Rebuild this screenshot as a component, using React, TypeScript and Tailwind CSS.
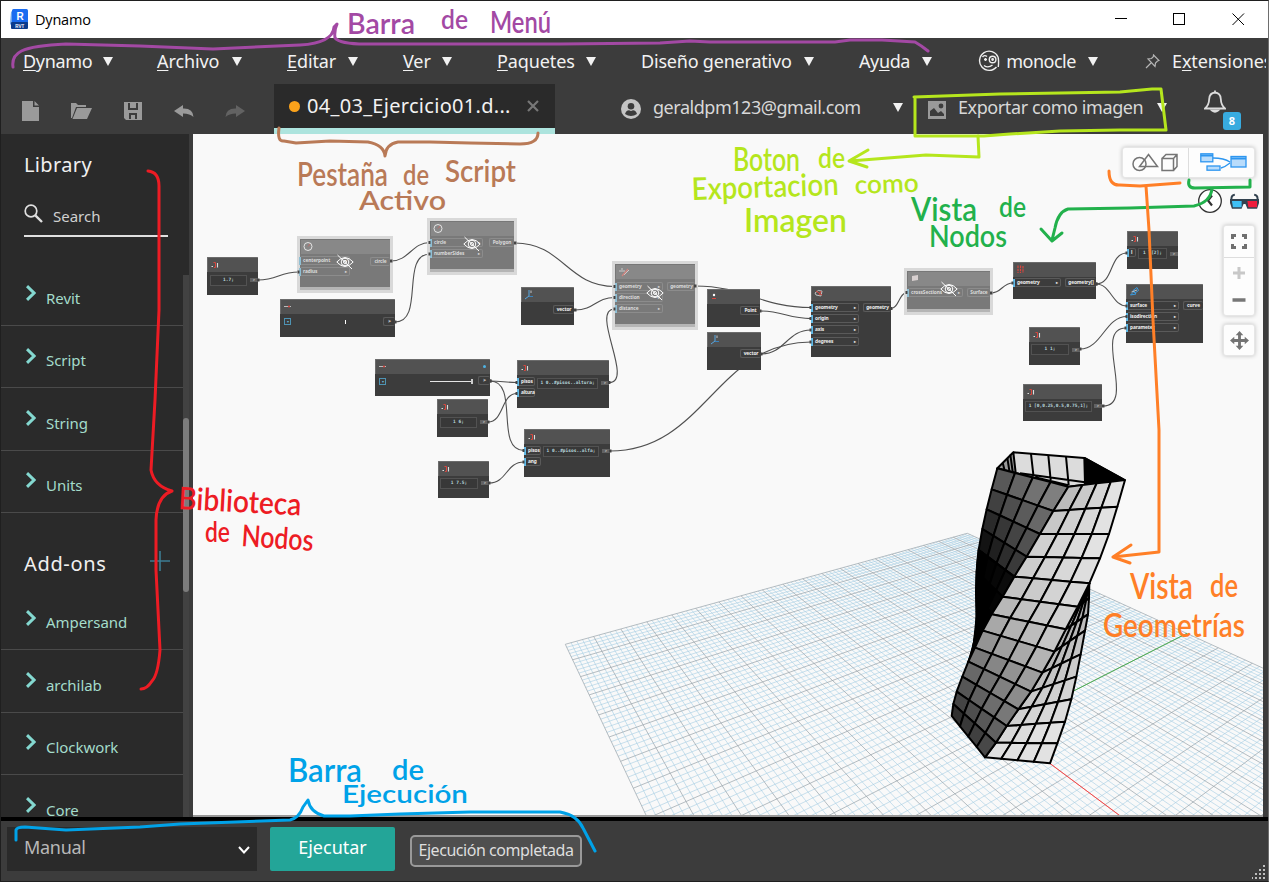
import React from "react";

const UI = "font-['Noto_Sans',sans-serif]";

/* ---------- small pieces ---------- */

function Tri() {
  return (
    <svg width="10" height="9" viewBox="0 0 10 9" className="shrink-0 -translate-x-px">
      <path d="M0 0H10L5 9Z" fill="#f2f2f2" />
    </svg>
  );
}

type MenuDef = { pre?: string; key: string; post: string; cls: string };
const MENUS: MenuDef[] = [
  { key: "D", post: "ynamo", cls: "w-[91px] mr-[43px] tracking-[-0.35px]" },
  { key: "A", post: "rchivo", cls: "w-[86px] mr-[44px]" },
  { key: "E", post: "ditar", cls: "w-[72px] mr-[44px]" },
  { key: "V", post: "er", cls: "w-[50px] mr-[44px]" },
  { key: "P", post: "aquetes", cls: "w-[100px] mr-[44px]" },
  { key: "", pre: "Diseño generativo", post: "", cls: "w-[174px] mr-[44px] tracking-[-0.2px]" },
  { key: "u", pre: "Ay", post: "da", cls: "w-[74px] mr-[45px] tracking-[-0.4px]" },
];

function TitleBar() {
  return (
    <div className="flex h-[37px] shrink-0 items-center bg-white pl-[9px]">
      <svg width="20" height="21" viewBox="0 0 20 21" className="shrink-0">
        <path d="M1 3L3 1V18L0 15Z" fill="#6aa5ee" />
        <rect x="2" y="0" width="16" height="15" rx="1.5" fill="#1a6cf0" />
        <rect x="1" y="13" width="17" height="7" rx="1" fill="#0c3c8c" />
        <text x="10" y="11" fontSize="10" fontWeight="700" fill="#fff" textAnchor="middle" fontFamily="Liberation Sans">R</text>
        <text x="9.8" y="18.6" fontSize="4.5" fontWeight="700" fill="#fff" textAnchor="middle" fontFamily="Liberation Sans">RVT</text>
      </svg>
      <span className="ml-[5px] font-['Open_Sans',sans-serif] text-[14.5px] tracking-[-0.2px] text-black">Dynamo</span>
      <svg width="154" height="37" viewBox="0 0 154 37" className="ml-auto translate-x-px" fill="none" stroke="#000" strokeWidth="1">
        <path d="M0 17.5H12" />
        <rect x="58.5" y="12.5" width="11" height="11" />
        <path d="M117.5 12.5L129 24M129 12.5L117.5 24" />
      </svg>
    </div>
  );
}

function MenuBar() {
  return (
    <div className="flex h-[46px] shrink-0 items-center overflow-hidden bg-[#3c3c3c] pl-[22px] text-[18px] tracking-[-0.1px] text-[#f2f2f2]">
      {MENUS.map((m, i) => (
        <div key={i} className={"flex shrink-0 items-center justify-between whitespace-nowrap " + m.cls}>
          <span>
            {m.pre}
            <u className="underline decoration-1 underline-offset-2">{m.key}</u>
            {m.post}
          </span>
          <Tri />
        </div>
      ))}
      <div className="mr-[46px] flex w-[121px] shrink-0 items-center justify-between">
        <svg width="22" height="22" viewBox="0 0 22 22" fill="none" stroke="#eee" strokeWidth="1.4">
          <path d="M18.5 17A9.6 9.6 0 1 1 20 7" />
          <path d="M20 7Q21 10 20.3 17" />
          <circle cx="14.6" cy="9.5" r="3.3" />
          <circle cx="14.6" cy="9.5" r=".7" fill="#eee" />
          <path d="M4.5 7Q6.5 4.5 9 6.5M6 9.5H9M7.5 8V11M6 15.5Q10 18.5 14.5 15" />
        </svg>
        <span className="-ml-[7px] tracking-[-0.5px]">monocle</span>
        <Tri />
      </div>
      <svg width="15" height="15" viewBox="0 0 15 15" className="mr-[12px] shrink-0" fill="none" stroke="#b5b5b5" strokeWidth="1.2">
        <path d="M8.5 1L14 6.5L12.5 7L10.5 9L10 12.5L3 5L6.5 4.5L8.3 2.7ZM6 9L1 14" />
      </svg>
      <span className="w-[94px] shrink-0 overflow-hidden whitespace-nowrap">
        E<u className="underline decoration-1 underline-offset-2">x</u>tensiones
      </span>
    </div>
  );
}

function ToolBar() {
  return (
    <div className="flex h-[50px] shrink-0 bg-[#3c3c3c]">
      <div className="flex w-[273px] shrink-0 items-center pl-[21px] pt-[4px] text-[#9a9a9a]">
        <svg width="18" height="20" viewBox="0 0 18 20" fill="currentColor">
          <path d="M0 0H11V6H17V20H0ZM12.5 0L17 4.5H12.5Z" />
        </svg>
        <svg width="21" height="16" viewBox="0 0 21 16" className="ml-[31px]" fill="currentColor">
          <path d="M0 15V0H5L7 2H15V4H5L1 15ZM6 5H21L16 16H1.5Z" />
        </svg>
        <svg width="18" height="18" viewBox="0 0 18 18" className="ml-[32px]" fill="currentColor">
          <path fillRule="evenodd" d="M0 0H18V18H2L0 16ZM4 1V8H14V1H12V6H6V1ZM5 11V17H7V13H11V17H13V11Z" />
        </svg>
        <svg width="20" height="13" viewBox="0 0 20 13" className="ml-[32px]" fill="currentColor">
          <path d="M0 6L9 0V3.5Q19 3 19.5 12Q16 8.500 9 8.500V12Z" />
        </svg>
        <svg width="20" height="13" viewBox="0 0 20 13" className="ml-[31px]" fill="#626262">
          <path d="M20 6L11 0V3.500Q1 3 .5 12Q4 8.500 11 8.500V12Z" />
        </svg>
      </div>
      <div className="flex w-[281px] shrink-0 flex-col bg-[#2a2a2a]">
        <div className="flex h-[44px] items-center pl-[15px]">
          <span className="size-[11px] rounded-full bg-[#faa21b]" />
          <span className="ml-[7px] w-[204px] whitespace-nowrap text-[20px] tracking-[0.3px] text-[#f2f2f2]">04_03_Ejercicio01.d...</span>
          <svg width="12" height="12" viewBox="0 0 12 12" className="ml-[15px] translate-x-px" stroke="#777" strokeWidth="2.2">
            <path d="M1 1L11 11M11 1L1 11" />
          </svg>
        </div>
        <div className="h-[6px] bg-[#ade4de]" />
      </div>
      <div className="ml-[66px] flex items-center pb-[3px] text-[18px] text-[#d8d8d8]">
        <svg width="20" height="20" viewBox="0 0 20 20" className="shrink-0 translate-y-px">
          <circle cx="10" cy="10" r="10" fill="#c4c4c4" />
          <circle cx="10" cy="7.300" r="3.300" fill="#3c3c3c" />
          <path d="M4 15Q5 11.500 8 11.200L10 12L12 11.200Q15 11.500 16 15Q10 19 4 15Z" fill="#3c3c3c" />
        </svg>
        <span className="ml-[12px] w-[241px] whitespace-nowrap tracking-[-0.47px]">geraldpm123@gmail.com</span>
        <Tri />
        <svg width="18" height="18" viewBox="0 0 18 18" className="ml-[24px] shrink-0 translate-y-[2px]">
          <path d="M0 0H18V18H0Z" fill="#9a9a9a" />
          <circle cx="13" cy="5" r="2.400" fill="#3c3c3c" />
          <path d="M2 15V10L6 7L10 12L13 10L16 13V15Z" fill="#3c3c3c" />
        </svg>
        <span className="ml-[12px] w-[200px] whitespace-nowrap tracking-[-0.41px]">Exportar como imagen</span>
        <Tri />
      </div>
      <div className="relative ml-[36px] mt-[6px] w-[40px]">
        <svg width="22" height="23" viewBox="0 0 22 23" fill="none" stroke="#dcdcdc" strokeWidth="1.800">
          <path d="M11 2.500Q5.500 3 5.200 9Q5 15 1 18.500H21Q17 15 16.800 9Q16.500 3 11 2.500ZM11 2.500V.5" />
          <path d="M8 20.500Q11 23 14 20.500Z" fill="#dcdcdc" />
        </svg>
        <span className="absolute left-[19px] top-[22px] flex h-[18px] w-[18px] items-center justify-center rounded-[3px] bg-[#38abdf] text-[11px] font-bold text-white">8</span>
      </div>
    </div>
  );
}

function LibRow({ label }: { label: string }) {
  return (
    <div className="flex h-[62.4px] shrink-0 items-center border-b border-[#4a4a4a] pl-[25px]">
      <svg width="10" height="16" viewBox="0 0 10 16" className="-translate-y-px" fill="none" stroke="#84d8d0" strokeWidth="3">
        <path d="M1 1.200L8 8L1 14.800" />
      </svg>
      <span className="ml-[10px] translate-y-1 text-[15px] tracking-[-0.05px] text-[#a4dccb]">{label}</span>
    </div>
  );
}

function Sidebar() {
  return (
    <div className="flex w-[192px] shrink-0 bg-[#3c3c3c]">
      <div className="relative flex w-[188px] flex-col overflow-hidden bg-[#2a2a2a]">
        <div className="flex h-[129.6px] shrink-0 flex-col pl-[23px]">
          <span className="mt-[17px] text-[20px] leading-[28px] tracking-[0.35px] text-[#f0f0f0]">Library</span>
          <div className="mt-[22px] flex h-[36px] w-[144px] items-start border-b-2 border-[#e0e0e0]">
            <svg width="19" height="19" viewBox="0 0 19 19" className="mt-[3px]" fill="none" stroke="#e0e0e0" strokeWidth="1.700">
              <circle cx="7" cy="7" r="5.800" />
              <path d="M11.300 11.300L18 18" strokeWidth="2.400" />
            </svg>
            <span className="ml-[10px] mt-[5px] text-[15px] leading-[20px] text-[#d0d0d0]">Search</span>
          </div>
        </div>
        <div className="flex min-h-0 flex-1 flex-col overflow-hidden pr-[6px]">
          <LibRow label="Revit" />
          <LibRow label="Script" />
          <LibRow label="String" />
          <LibRow label="Units" />
          <div className="flex h-[74.8px] shrink-0 items-end justify-between pb-[10px] pl-[23px] pr-[13px]">
            <span className="text-[20px] leading-[28px] tracking-[0.65px] text-[#f0f0f0]">Add-ons</span>
            <svg width="20" height="22" viewBox="0 0 20 22" className="mb-[6px]" stroke="#3c7c92" strokeWidth="1.600">
              <path d="M0 11H20M10 1V21" />
            </svg>
          </div>
          <LibRow label="Ampersand" />
          <LibRow label="archilab" />
          <LibRow label="Clockwork" />
          <LibRow label="Core" />
        </div>
        <div className="absolute bottom-0 right-0 top-[141px] w-[6px] bg-[#424242]">
          <div className="mt-[143px] h-[174px] rounded-[3px] bg-[#7c7c7c]" />
        </div>
      </div>
    </div>
  );
}

/* ---------- ground grid and tower ---------- */

function project(u: number, v: number): [number, number] {
  const w = 0.02206 * u - 0.0396 * v + 1;
  const x = (87.26 * u + 20.43 * v + 16) / w;
  const y = (-15.77 * u + 29.8 * v + 373) / w;
  return [x / 3 + 560, y / 3 + 520];
}
function seg(u0: number, v0: number, u1: number, v1: number) {
  const [a, b] = project(u0, v0);
  const [c, d] = project(u1, v1);
  return `M${a.toFixed(1)} ${b.toFixed(1)}L${c.toFixed(1)} ${d.toFixed(1)}`;
}
let minorPath = "";
let majorPath = "";
for (let i = 0; i <= 100; i++) {
  const t = i / 5;
  const s = seg(t, 0, t, 20) + seg(0, t, 20, t);
  if (i % 5 === 0) majorPath += s;
  else minorPath += s;
}

type P = [number, number];
const lerp = (a: P, b: P, t: number): P => [a[0] + (b[0] - a[0]) * t, a[1] + (b[1] - a[1]) * t];

const EDGE_A: P[] = [[445,170],[400,243],[360,312],[320,380],[283,440],[248,500],[215,553],[188,602],[165,653],[145,695],[127,740],[110,785],[100,822],[95,858]];
const EDGE_B: P[] = [[615,150],[592,230],[567,312],[540,385],[508,460],[473,530],[437,598],[403,665],[367,728],[333,785],[295,838],[260,888],[228,938],[195,982]];
const EDGE_C: P[] = [[508,460],[507,505],[504,553],[495,602],[482,673],[469,740],[454,808],[435,875],[412,940],[390,1000]];
const EDGE_D: P[] = [[232,115],[215,178],[200,238],[187,297],[176,360],[170,425],[168,485],[170,545],[168,600],[158,660]];

function face(l: P[], r: P[], shade: (row: number, col: number) => number) {
  const out: React.ReactNode[] = [];
  for (let i = 0; i + 1 < Math.min(l.length, r.length); i++) {
    for (let c = 0; c < 4; c++) {
      const pts = [lerp(l[i], r[i], c / 4), lerp(l[i], r[i], (c + 1) / 4), lerp(l[i + 1], r[i + 1], (c + 1) / 4), lerp(l[i + 1], r[i + 1], c / 4)];
      const g = Math.round(shade(i, c));
      out.push(<polygon key={`${i}-${c}`} points={pts.map((p) => p.join(",")).join(" ")} fill={`rgb(${g},${g},${g})`} />);
    }
  }
  return out;
}
const FRONT_L = [188, 200, 208, 205, 196, 184, 168, 148, 122, 104, 86, 68, 48];
const FRONT_R = [226, 226, 226, 222, 218, 210, 198, 180, 158, 140, 120, 98, 72];

function Scene() {
  return (
    <svg width="1070" height="681" viewBox="193 134 1070 681" className="absolute inset-0">
      <path d={minorPath} stroke="#a4cce2" strokeWidth=".7" strokeOpacity=".85" fill="none" />
      <path d={majorPath} stroke="#99a5ab" strokeWidth=".8" strokeOpacity=".9" fill="none" />
      <path d={seg(10, 10, 10, 20)} stroke="#f44" strokeWidth="1" />
      <path d={seg(10, 10, 20, 10)} stroke="#4caf50" strokeWidth="1" />
      <g transform="translate(920 430) scale(.33333)" stroke="#000" strokeWidth="6" strokeLinejoin="round">
        <polygon points="280,67 493,84 613,150 445,170 232,115" fill="#dcdcdc" />
        <polygon points="493,84 613,150 495,160" fill="#000" />
        <polygon points="280,67 287,128 232,115" fill="#999" />
        <path d="M333 72L340 134M385 76L392 150M438 80L446 165M262 84L268 122M248 98L253 118M271 74L278 125M300 130L495 157M345 142L445 166" fill="none" />
        {face(EDGE_D, EDGE_A, (r, c) => Math.max(0, 88 + c * 13 - r * 23))}
        <path d="M176 360C165 440 168 500 170 560L160 655L283 440Z" fill="#000" fillOpacity=".65" />
        {face(EDGE_B.slice(4), EDGE_C, (r, c) => Math.min(226, 160 + r * 8 + c * 4))}
        {face(EDGE_A, EDGE_B, (r, c) => FRONT_L[r] + ((FRONT_R[r] - FRONT_L[r]) * c) / 3)}
      </g>
    </svg>
  );
}

/* ---------- graph nodes ---------- */

type Port = { x: number; y: number; w: number; label: string; out?: boolean };
type NodeDef = {
  x: number; y: number; w: number; h: number;
  kind?: "hidden" | "slider";
  icon: "code" | "axis" | "circle" | "slide" | "move" | "point" | "list" | "rot" | "surf" | "link";
  code?: { x: number; y: number; w: number; text: string };
  ports?: Port[];
  eye?: [number, number];
};

const NODES: NodeDef[] = [
  { x: 207, y: 257, w: 51, h: 38, icon: "code", code: { x: 210, y: 275, w: 37, text: "1.7;" }, ports: [{ x: 250, y: 280, w: 8, label: ">", out: true }] },
  { x: 300, y: 239, w: 90, h: 51, kind: "hidden", icon: "circle", eye: [345, 262], ports: [{ x: 300, y: 261, w: 50, label: "centerpoint" }, { x: 300, y: 272, w: 50, label: "radius" }, { x: 370, y: 262, w: 20, label: "circle", out: true }] },
  { x: 430, y: 221, w: 84, h: 51, kind: "hidden", icon: "circle", eye: [472, 244], ports: [{ x: 431, y: 243, w: 52, label: "circle" }, { x: 431, y: 254, w: 52, label: "numberSides" }, { x: 489, y: 243, w: 25, label: "Polygon", out: true }] },
  { x: 280, y: 299, w: 115, h: 38, kind: "slider", icon: "slide", ports: [{ x: 383, y: 322, w: 12, label: ">", out: true }] },
  { x: 375, y: 359, w: 115, h: 37, kind: "slider", icon: "slide", ports: [{ x: 478, y: 381, w: 12, label: ">", out: true }] },
  { x: 437, y: 399, w: 51, h: 38, icon: "code", code: { x: 440, y: 417, w: 37, text: "1 6;" }, ports: [{ x: 480, y: 422, w: 8, label: ">", out: true }] },
  { x: 438, y: 461, w: 51, h: 37, icon: "code", code: { x: 440, y: 478, w: 38, text: "1 7.5;" }, ports: [{ x: 481, y: 483, w: 8, label: ">", out: true }] },
  { x: 517, y: 360, w: 92, h: 48, icon: "code", code: { x: 537, y: 378, w: 61, text: "1 0..#pisos..altura;" }, ports: [{ x: 518, y: 382, w: 17, label: "pisos" }, { x: 518, y: 393, w: 17, label: "altura" }, { x: 601, y: 383, w: 8, label: ">", out: true }] },
  { x: 524, y: 429, w: 86, h: 48, icon: "code", code: { x: 543, y: 446, w: 56, text: "1 0..#pisos..alfa;" }, ports: [{ x: 525, y: 451, w: 16, label: "pisos" }, { x: 525, y: 462, w: 16, label: "ang" }, { x: 602, y: 451, w: 8, label: ">", out: true }] },
  { x: 521, y: 287, w: 53, h: 38, icon: "axis", ports: [{ x: 553, y: 310, w: 21, label: "vector", out: true }] },
  { x: 615, y: 264, w: 80, h: 63, kind: "hidden", icon: "move", eye: [655, 293], ports: [{ x: 616, y: 287, w: 47, label: "geometry" }, { x: 616, y: 298, w: 47, label: "direction" }, { x: 616, y: 309, w: 47, label: "distance" }, { x: 667, y: 287, w: 28, label: "geometry", out: true }] },
  { x: 707, y: 289, w: 53, h: 38, icon: "point", ports: [{ x: 740, y: 311, w: 20, label: "Point", out: true }] },
  { x: 707, y: 332, w: 54, h: 38, icon: "axis", ports: [{ x: 740, y: 354, w: 21, label: "vector", out: true }] },
  { x: 811, y: 286, w: 80, h: 71, icon: "rot", ports: [{ x: 812, y: 308, w: 47, label: "geometry" }, { x: 812, y: 319, w: 47, label: "origin" }, { x: 812, y: 330, w: 47, label: "axis" }, { x: 812, y: 342, w: 47, label: "degrees" }, { x: 863, y: 308, w: 28, label: "geometry", out: true }] },
  { x: 907, y: 271, w: 83, h: 41, kind: "hidden", icon: "surf", eye: [949, 289], ports: [{ x: 908, y: 293, w: 55, label: "crossSections" }, { x: 967, y: 293, w: 23, label: "Surface", out: true }] },
  { x: 1013, y: 262, w: 83, h: 37, icon: "list", ports: [{ x: 1014, y: 283, w: 47, label: "geometry" }, { x: 1065, y: 283, w: 31, label: "geometry[]", out: true }] },
  { x: 1127, y: 231, w: 51, h: 38, icon: "code", code: { x: 1138, y: 248, w: 29, text: "1 l[2];" }, ports: [{ x: 1128, y: 253, w: 8, label: "l" }, { x: 1170, y: 254, w: 8, label: ">", out: true }] },
  { x: 1126, y: 284, w: 77, h: 59, icon: "link", ports: [{ x: 1127, y: 306, w: 52, label: "surface" }, { x: 1127, y: 317, w: 52, label: "isodirection" }, { x: 1127, y: 328, w: 52, label: "parameter" }, { x: 1183, y: 306, w: 20, label: "curve", out: true }] },
  { x: 1029, y: 327, w: 51, h: 38, icon: "code", code: { x: 1031, y: 344, w: 38, text: "1 1;" }, ports: [{ x: 1072, y: 350, w: 8, label: ">", out: true }] },
  { x: 1023, y: 384, w: 79, h: 37, icon: "code", code: { x: 1025, y: 401, w: 67, text: "1 [0,0.25,0.5,0.75,1];" }, ports: [{ x: 1094, y: 406, w: 8, label: ">", out: true }] },
];

function NodeIcon({ icon }: { icon: NodeDef["icon"] }) {
  return (
    <svg width="14" height="12" viewBox="0 0 14 12" className="absolute left-[3px] top-[2px]" fill="none">
      {icon === "code" && (<><path d="M1.500 7.500H3M7.500 4V8.500" stroke="#ddd" strokeWidth="1.100" /><path d="M3.500 3.500H5.500V8.500H4" stroke="#d9463e" /></>)}
      {icon === "axis" && (<><path d="M5 1V7L1 10" stroke="#59a7e0" strokeWidth="1" /><path d="M5 7.500H9" stroke="#3b83bd" strokeWidth="1" /><path d="M7 1.500V4" stroke="#ddd" strokeWidth=".8" /></>)}
      {icon === "circle" && (<><circle cx="5" cy="5.500" r="4" stroke="#eee" strokeWidth=".9" /><path d="M5 5.500L7 3" stroke="#ca6660" strokeWidth=".8" /></>)}
      {icon === "slide" && (<><path d="M1 5.500H8" stroke="#bbb" /><circle cx="6" cy="5.500" r="1" fill="#d9463e" /></>)}
      {icon === "move" && (<><path d="M1 5H7M4 2V4M6 9L11 4" stroke="#ddd" strokeWidth=".8" /><path d="M4 10L10 3" stroke="#d08580" strokeWidth="1.200" /></>)}
      {icon === "point" && (<><circle cx="4" cy="4" r="1.200" fill="#fff" /><path d="M2 7.500H6" stroke="#d9463e" /></>)}
      {icon === "list" && (<path d="M2 1.500V9M4.500 1.500V9M7 2V9" stroke="#d9463e" strokeWidth="1.200" strokeDasharray="2.500 .7" />)}
      {icon === "rot" && (<><path d="M1 5Q4 1 8 3L7 8L2 7Z" stroke="#ccc" strokeWidth=".9" /><path d="M2 3L8 7M5 7L7 3" stroke="#d9463e" /></>)}
      {icon === "surf" && (<path d="M2 3L8 2V7L2 8Z" fill="#d8d0d0" />)}
      {icon === "link" && (<><path d="M1.500 9L5 5.500L7 8ZM4 4.500L8 1.500L9.500 4.500L6 7Z" stroke="#3a9be0" /><path d="M2.500 6L8 4" stroke="#eee" strokeWidth=".7" /></>)}
    </svg>
  );
}

function NodeBox({ n }: { n: NodeDef }) {
  const hid = n.kind === "hidden";
  return (
    <div
      className={"absolute " + (hid ? "bg-[#797979] outline-[3px] outline-[#d9d9d9]" : "rounded-t-[2px] bg-[#3c3c3c]")}
      style={{ left: n.x - 193, top: n.y - 134, width: n.w, height: n.h }}
    >
      <div className={"h-[15px] rounded-t-[1px] border-l border-t " + (hid ? "border-[#777] bg-[#888]" : "border-[#6c6c6c] bg-[#525252]")} />
      {hid && <div className="absolute inset-x-0 bottom-0 h-[3px] bg-[#b5b5b5]" />}
      <NodeIcon icon={n.icon} />
      {n.kind === "slider" && (
        <>
          <div className="absolute left-[4px] top-[19px] flex size-[7px] items-center justify-center border border-[#4e93b3] text-[4px] leading-none text-[#6bb7dd]">▾</div>
          {n.x === 280 ? (
            <div className="absolute left-[65px] top-[21px] h-[4px] w-px bg-white" />
          ) : (
            <>
              <div className="absolute left-[55px] top-[22px] h-px w-[42px] bg-[#e5e5e5]" />
              <div className="absolute left-[96px] top-[20px] h-[5px] w-[2px] bg-[#ccc]" />
              <div className="absolute left-[108px] top-[6px] size-[3px] rounded-full bg-[#4fb3e4]" />
            </>
          )}
        </>
      )}
      {n.code && (
        <div
          className="absolute flex h-[11px] items-center justify-center overflow-hidden whitespace-pre border border-[#525252] bg-[#383838] font-['DejaVu_Sans_Mono',monospace] text-[4.500px] font-bold leading-none text-[#b9d7dd]"
          style={{ left: n.code.x - n.x, top: n.code.y - n.y, width: n.code.w }}
        >
          {n.code.text}
        </div>
      )}
      {n.ports?.map((p, i) => {
        const chip = p.out && p.w === 8;
        const base = "absolute flex items-center whitespace-nowrap font-bold leading-none tracking-[-0.1px] ";
        const tone = chip
          ? "h-[4px] translate-y-[3px] bg-[#626262] text-[3.500px] text-[#ddd] "
          : "h-[9px] rounded-[2px] border text-[4.800px] " + (hid ? "border-[#8c8c8c] text-[#d9d9d9] " : "border-[#5a5a5a] text-[#f0f0f0] ");
        const side = p.out ? "justify-center border-r-0" : "justify-between border-l-0 pl-[3px] pr-[2px]";
        return (
          <div key={i} className={base + tone + side} style={{ left: p.x - n.x, top: p.y - n.y - 5, width: p.w }}>
            {!p.out && <i className={"absolute -left-px top-0 h-[8px] w-[2px] " + (hid ? "bg-[#8fbfd4]" : "bg-[#62bbe8]")} />}
            <span>{p.label}</span>
            {!p.out && p.w > 30 && <span className="text-[4px]">▸</span>}
          </div>
        );
      })}
      {n.eye && (
        <svg width="18" height="16" viewBox="0 0 18 16" className="absolute" style={{ left: n.eye[0] - n.x - 9, top: n.eye[1] - n.y - 8 }} fill="none" stroke="#fff" strokeWidth="1">
          <path d="M.8 8Q9-1 17.200 8Q9 17 .8 8Z" />
          <circle cx="9" cy="8" r="3.800" />
          <circle cx="9" cy="8" r="1.500" />
          <path d="M1.500 1L16 15" />
        </svg>
      )}
    </div>
  );
}

type Wire = [number, number, number, number, number];
const WIRES: Wire[] = [
  [258, 280, 299, 272, 20], [391, 261, 430, 242.5, 18], [395, 322, 430, 254, 30],
  [515, 243, 615, 286.5, 48], [575, 310, 615, 297.5, 20], [609, 382.5, 615, 309, 26],
  [695, 286, 811, 307.5, 50], [760, 311, 811, 318.6, 22], [761, 354, 811, 330, 24],
  [610, 451, 811, 342, 95], [891, 308.5, 907, 292.5, 8], [991, 293, 1013, 283, 11],
  [1096, 284, 1127, 253, 18], [1096, 284, 1127, 306, 15], [1080, 349, 1127, 316.5, 22],
  [1103, 406, 1126, 328, 34], [490, 381, 517, 382.5, 12], [490, 381, 524, 450.5, 30],
  [488, 422, 517, 393.5, 16], [489, 483, 524, 462, 18],
];

function Graph() {
  return (
    <>
      <svg width="1070" height="681" viewBox="193 134 1070 681" className="absolute inset-0">
        {WIRES.map(([a, b, c, d, k], i) => (
          <path key={i} d={`M${a} ${b}C${a + k} ${b} ${c - k} ${d} ${c} ${d}`} fill="none" stroke="#505050" strokeWidth="1.100" />
        ))}
      </svg>
      {NODES.map((n, i) => <NodeBox key={i} n={n} />)}
      <svg width="1070" height="681" viewBox="193 134 1070 681" className="absolute inset-0">
        {WIRES.map(([a, b, c, d], i) => (
          <path key={i} d={`M${a - 1} ${b - 1.5}h2.500v3h-2.500zM${c - 1.5} ${d - 1.5}h2v3h-2z`} fill="#444" />
        ))}
      </svg>
    </>
  );
}

/* ---------- floating canvas controls ---------- */

function CanvasControls() {
  const card = "rounded-[3px] border border-[#e6e6e6] bg-[#fdfdfd] shadow-[0_0_4px_rgba(0,0,0,0.22)]";
  return (
    <div className="absolute right-[8px] top-[13px] flex flex-col items-end">
      <div className={"flex h-[31px] w-[133px] " + card}>
        <div className="flex flex-1 items-center justify-center border-r border-[#ddd]">
          <svg width="46" height="19" viewBox="0 0 46 19" className="-translate-x-px" fill="none" stroke="#757575" strokeWidth="1.500">
            <circle cx="7.500" cy="11" r="6.500" />
            <path d="M16.500 1.500L25.500 13.500H7.500Z" />
            <path d="M30 5.500H41.500V17.500H30ZM30 5.500L34 1.500H45V13.500L41.500 17.500M41.500 5.500L45 1.500" />
          </svg>
        </div>
        <div className="flex flex-1 items-center justify-center">
          <svg width="47" height="18" viewBox="0 0 47 18" className="translate-x-[2px] -translate-y-px" fill="#b9dcfb" stroke="#2d96f0" strokeWidth="1.300">
            <path d="M13 5Q24 5 30 9M21 15Q25 14 30 10" fill="none" />
            <rect x=".8" y=".8" width="12" height="8" /><path d="M.8 2.500H13" strokeWidth="2" />
            <rect x="7" y="13" width="13" height="4.200" />
            <rect x="31" y="3.500" width="15" height="10.500" /><path d="M31 5.500H46" strokeWidth="2" />
          </svg>
        </div>
      </div>
      <div className="mr-[-3px] mt-[10px] flex translate-x-px items-center gap-[7px]">
        <svg width="26" height="26" viewBox="0 0 26 26" fill="none" stroke="#333">
          <circle cx="13" cy="13" r="11.300" fill="#fff" strokeWidth="1.300" />
          <path d="M15 7.500L11 12.500L15 17.500" strokeWidth="2.200" />
        </svg>
        <svg width="29" height="18" viewBox="0 0 30 18" className="translate-y-px">
          <path d="M1.500 7Q1 2 5 1.500M28.500 7Q29 2 25 1.500" fill="none" stroke="#33424f" strokeWidth="2" />
          <path d="M0 6H30V10L28 16H18L16 11H14L12 16H2L0 10Z" fill="#33424f" />
          <path d="M2 8H12V14.500H3Z" fill="#3fc0f5" />
          <path d="M18 8H28V14.500H19Z" fill="#f01c3c" />
        </svg>
      </div>
      <div className={"mt-[11px] flex h-[91px] w-[32px] flex-col items-center " + card}>
        <svg width="30" height="89" viewBox="0 0 30 89" fill="none" stroke="#707070" strokeWidth="3">
          <path d="M8.500 13V9.500H12M18 9.500H21.500V13M21.500 18V21.500H18M12 21.500H8.500V18" />
          <path d="M0 31.500H30" stroke="#ddd" strokeWidth="1" />
          <path d="M15 41V53M9 47H21" stroke="#c8c8c8" />
          <path d="M8.500 74H21.500" stroke="#777" strokeWidth="3.500" />
        </svg>
      </div>
      <div className={"mt-[8px] flex h-[32px] w-[32px] items-center justify-center " + card}>
        <svg width="19" height="19" viewBox="0 0 20 20" fill="#737373">
          <path d="M10 0L14 4.500H11.500V8.500H15.500V6L20 10L15.500 14V11.500H11.500V15.500H14L10 20L6 15.500H8.500V11.500H4.500V14L0 10L4.500 6V8.500H8.500V4.500H6Z" />
        </svg>
      </div>
    </div>
  );
}

/* ---------- pen annotations over the window ---------- */

type Word = { t: string; x: number; y: number; w: number; s: number; r?: number };
const NOTES: { color: string; lines: string[]; words: Word[] }[] = [
  {
    color: "#a349a4",
    lines: ["M13 67C11 53 20 46 66 44L140 46L213 49L300 45Q333 43 334 27L337 24Q334 30 335 38Q340 44 365 44H560L660 43L690 41L710 42H835L850 40H882L915 42Q922 46 928 51"],
    words: [{ t: "Barra", x: 347, y: 34, w: 68, s: 29 }, { t: "de", x: 441, y: 29, w: 27, s: 27 }, { t: "Menú", x: 490, y: 33, w: 61, s: 30 }],
  },
  {
    color: "#b97a57",
    lines: ["M279 128Q277 142 284 141L296 143L330 141L368 142Q384 145 385 156Q386 144 398 142L430 142L470 143L520 144Q538 144 538 133"],
    words: [{ t: "Pestaña", x: 297, y: 186, w: 91, s: 32 }, { t: "de", x: 403, y: 185, w: 26, s: 29 }, { t: "Script", x: 445, y: 182, w: 71, s: 30 }, { t: "Activo", x: 359, y: 210, w: 87, s: 26 }],
  },
  {
    color: "#b5e61d",
    lines: ["M914 97L1000 94L1120 92L1152 89H1161L1166 130L1120 130L1060 131L1010 134L984 136H915V97", "M978 136L979 157L926 155L850 161M868 150L849 161L867 167"],
    words: [{ t: "Boton", x: 733, y: 171, w: 67, s: 32 }, { t: "de", x: 818, y: 168, w: 27, s: 29 }, { t: "Exportacion", x: 692, y: 200, w: 147, s: 31, r: -2 }, { t: "como", x: 855, y: 194, w: 64, s: 26, r: -2 }, { t: "Imagen", x: 744, y: 232, w: 103, s: 32 }],
  },
  {
    color: "#22b14c",
    lines: ["M1189 180Q1187 188 1195 188L1250 187V180M1212 188Q1211 202 1194 206L1130 208L1068 209Q1058 212 1055 228L1052 240M1041 229L1052 241L1062 233"],
    words: [{ t: "Vista", x: 911, y: 221, w: 66, s: 32 }, { t: "de", x: 999, y: 217, w: 27, s: 28 }, { t: "Nodos", x: 929, y: 247, w: 78, s: 30 }],
  },
  {
    color: "#ed1c24",
    lines: ["M148 171Q159 172 159 186V310L155 400L151 470Q154 486 172 491Q157 496 156 520V570L160 650Q158 675 152 681Q147 689 141 689"],
    words: [{ t: "Biblioteca", x: 178, y: 509, w: 123, s: 31, r: 3 }, { t: "de", x: 205, y: 542, w: 25, s: 28 }, { t: "Nodos", x: 241, y: 546, w: 72, s: 30, r: 4 }],
  },
  {
    color: "#ff7f27",
    lines: ["M1109 171Q1109 186 1120 185L1140 186L1180 183M1146 186L1149 230L1153 320L1159 430V552L1113 557M1131 545L1113 557L1130 563"],
    words: [{ t: "Vista", x: 1130, y: 599, w: 63, s: 37 }, { t: "de", x: 1210, y: 597, w: 28, s: 33 }, { t: "Geometrías", x: 1103, y: 637, w: 142, s: 32 }],
  },
  {
    color: "#00a2e8",
    lines: ["M16 840V830Q17 827 25 827L66 830L140 827L180 824L290 820Q299 818 303 807L308 800Q310 812 324 816L350 816L400 814L470 812L560 812Q577 815 583 828L595 851"],
    words: [{ t: "Barra", x: 288, y: 782, w: 74, s: 32 }, { t: "de", x: 392, y: 780, w: 32, s: 29 }, { t: "Ejecución", x: 342, y: 803, w: 126, s: 24 }],
  },
];

function Annotations() {
  return (
    <svg width="1269" height="882" viewBox="0 0 1269 882" className="pointer-events-none absolute inset-0">
      {NOTES.map((n, i) => (
        <g key={i}>
          {n.lines.map((d, j) => <path key={j} d={d} fill="none" stroke={n.color} strokeWidth="3" strokeLinejoin="round" strokeLinecap="round" />)}
          {n.words.map((w, j) => (
            <text
              key={j}
              x={w.x}
              y={w.y}
              fontSize={w.s}
              textLength={w.w}
              lengthAdjust="spacingAndGlyphs"
              transform={w.r ? `rotate(${w.r} ${w.x} ${w.y})` : undefined}
              fontFamily="Lato, sans-serif"
              fontWeight="600"
              fill={n.color}
            >
              {w.t}
            </text>
          ))}
        </g>
      ))}
    </svg>
  );
}

function Footer() {
  return (
    <div className="flex h-[60px] shrink-0 bg-[#3c3c3c] pl-[6px] pt-[6px]">
      <div className="flex h-[44px] w-[250px] items-center justify-between bg-[#2a2a2a] pb-[3px] pl-[17px] pr-[7px] text-[18px] tracking-[-0.3px] text-[#b8b8b8]">
        Manual
        <svg width="12" height="9" viewBox="0 0 12 9" className="translate-y-[3px]" fill="none" stroke="#fff" strokeWidth="2"><path d="M1 1L6 6.500L11 1" /></svg>
      </div>
      <div className="ml-[13px] flex h-[44px] w-[125px] items-center justify-center rounded-[2px] bg-[#23a598] pb-[3px] text-[18px] text-white">Ejecutar</div>
      <div className="ml-[15px] mt-[8px] flex h-[32px] w-[172px] items-center justify-center whitespace-nowrap rounded-[5px] border-2 border-[#999] bg-[#4f4f4f] pb-[3px] text-[16px] tracking-[-0.45px] text-[#dedede]">
        Ejecución completada
      </div>
      <svg width="14" height="14" viewBox="0 0 14 14" className="mb-[2px] ml-auto mr-[2px] self-end" fill="#bdbdbd">
        <path d="M11 0h2v2h-2zM11 4h2v2h-2zM11 8h2v2h-2zM11 12h2v2h-2zM7 4h2v2h-2zM7 8h2v2h-2zM7 12h2v2h-2zM3 8h2v2h-2zM3 12h2v2h-2zM0 12h1v2h-1z" />
      </svg>
    </div>
  );
}

export default function App() {
  return (
    <div className={"relative flex h-[882px] w-[1269px] flex-col overflow-hidden border border-[#1f1f1f] border-r-[#6e6e6e] " + UI}>
      <TitleBar />
      <MenuBar />
      <ToolBar />
      <div className="flex h-[683px] shrink-0">
        <Sidebar />
        <div className="flex w-[1070px] shrink-0 flex-col">
          <div className="relative h-[681px] overflow-hidden bg-[#f9f9f9]">
            <Scene />
            <Graph />
            <CanvasControls />
          </div>
          <div className="h-[2px] bg-[#999]" />
        </div>
        <div className="flex-1 bg-[#3c3c3c]" />
      </div>
      <div className="h-[4px] shrink-0 bg-black" />
      <Footer />
      <div className="absolute -left-px -top-px">
        <Annotations />
      </div>
    </div>
  );
}
